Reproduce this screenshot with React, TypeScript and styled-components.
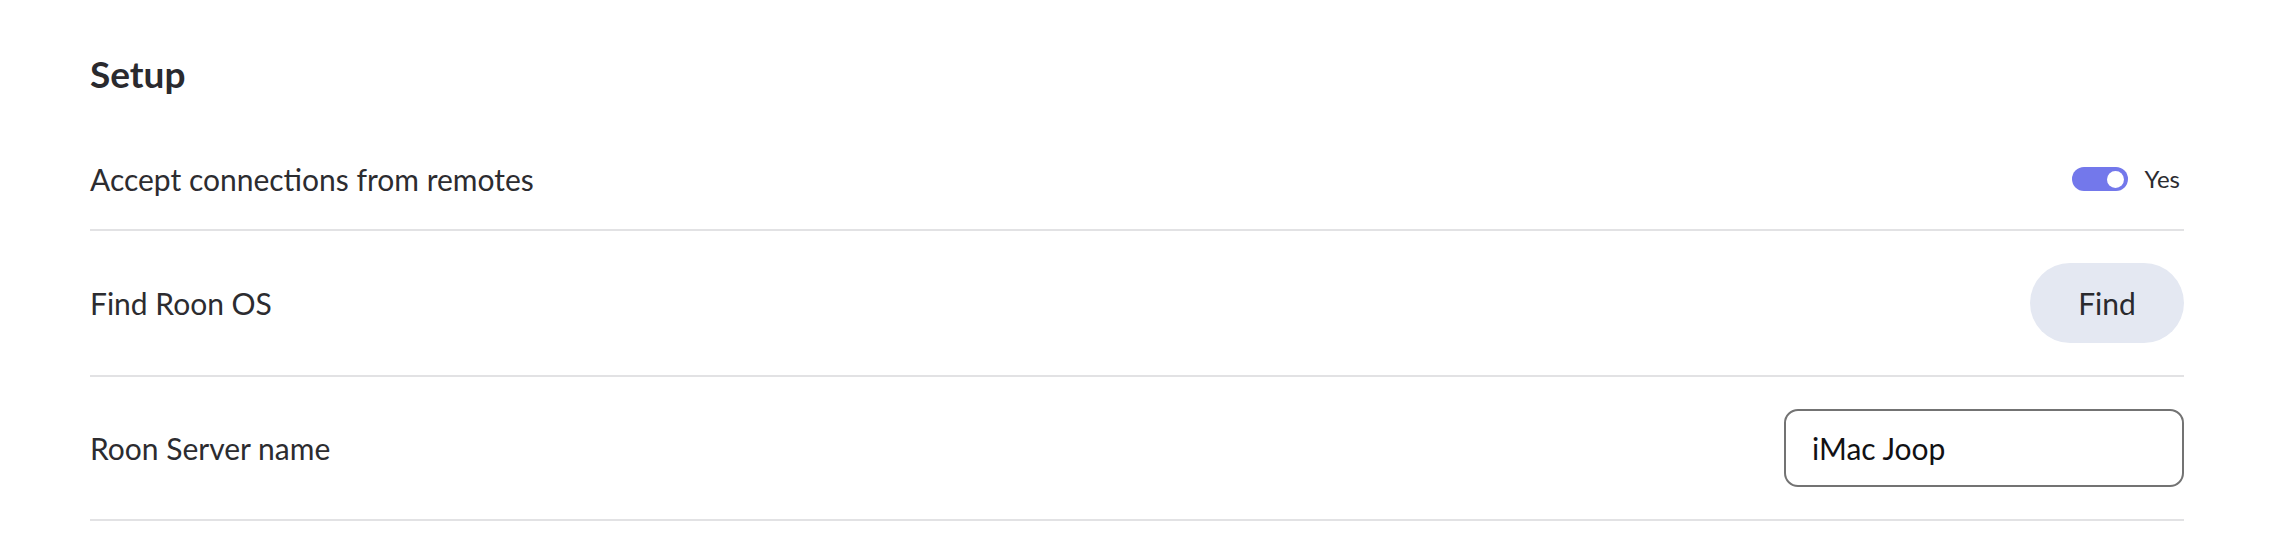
import * as React from "react";
import styled, { createGlobalStyle } from "styled-components";

export default function App() {
  const [accept, setAccept] = React.useState(true);
  const [name, setName] = React.useState("iMac Joop");

  return (
    <>
      <GlobalStyle />
      <Page>
        <Title>Setup</Title>
        <List>
          <Row>
            <Label>Accept connections from remotes</Label>
            <ToggleWrap onClick={() => setAccept(!accept)}>
              <Track $on={accept}>
                <Knob $on={accept} />
              </Track>
              <ToggleText>{accept ? "Yes" : "No"}</ToggleText>
            </ToggleWrap>
          </Row>
          <Row>
            <Label>Find Roon OS</Label>
            <PillButton>Find</PillButton>
          </Row>
          <Row>
            <Label>Roon Server name</Label>
            <TextInput value={name} onChange={(e) => setName(e.target.value)} />
          </Row>
        </List>
      </Page>
    </>
  );
}

const GlobalStyle = createGlobalStyle`
  body {
    margin: 0;
    background: #ffffff;
    font-family: Lato, "Open Sans", sans-serif;
    color: #2a2a2e;
  }
`;

const Page = styled.main`
  padding: 54px 98px 0 90px;
`;

const Title = styled.h2`
  margin: 0 0 35px;
  font-size: 37px;
  line-height: 40px;
  font-weight: 700;
  color: #2a2a2e;
`;

const List = styled.div`
  display: flex;
  flex-direction: column;
`;

const Row = styled.div`
  display: flex;
  align-items: center;
  justify-content: space-between;
  padding: 32px 0;
  border-bottom: 2px solid #e2e2e4;
`;

const Label = styled.span`
  font-size: 30px;
  line-height: 36px;
  color: #2c2c30;
`;

const ToggleWrap = styled.label`
  display: flex;
  align-items: center;
  gap: 17px;
  cursor: pointer;
`;

const Track = styled.span<{ $on: boolean }>`
  display: flex;
  align-items: center;
  justify-content: ${(p) => (p.$on ? "flex-end" : "flex-start")};
  width: 56px;
  height: 24px;
  padding: 0 4px;
  box-sizing: border-box;
  border-radius: 12px;
  background: ${(p) => (p.$on ? "#7378eb" : "#c8c8cc")};
`;

const Knob = styled.span<{ $on: boolean }>`
  width: 17px;
  height: 17px;
  border-radius: 50%;
  background: #ffffff;
`;

const ToggleText = styled.span`
  font-size: 24px;
  line-height: 26px;
  padding-right: 4px;
  color: #2c2c30;
`;

const PillButton = styled.button`
  width: 154px;
  height: 80px;
  border: none;
  border-radius: 40px;
  background: #e4e8f2;
  color: #2a2a2e;
  font-family: Lato, sans-serif;
  font-size: 30px;
  cursor: pointer;
`;

const TextInput = styled.input`
  width: 400px;
  height: 78px;
  box-sizing: border-box;
  padding: 0 26px;
  border: 2px solid #737373;
  border-radius: 14px;
  font-family: Lato, sans-serif;
  font-size: 30px;
  color: #111114;
  outline: none;
`;
